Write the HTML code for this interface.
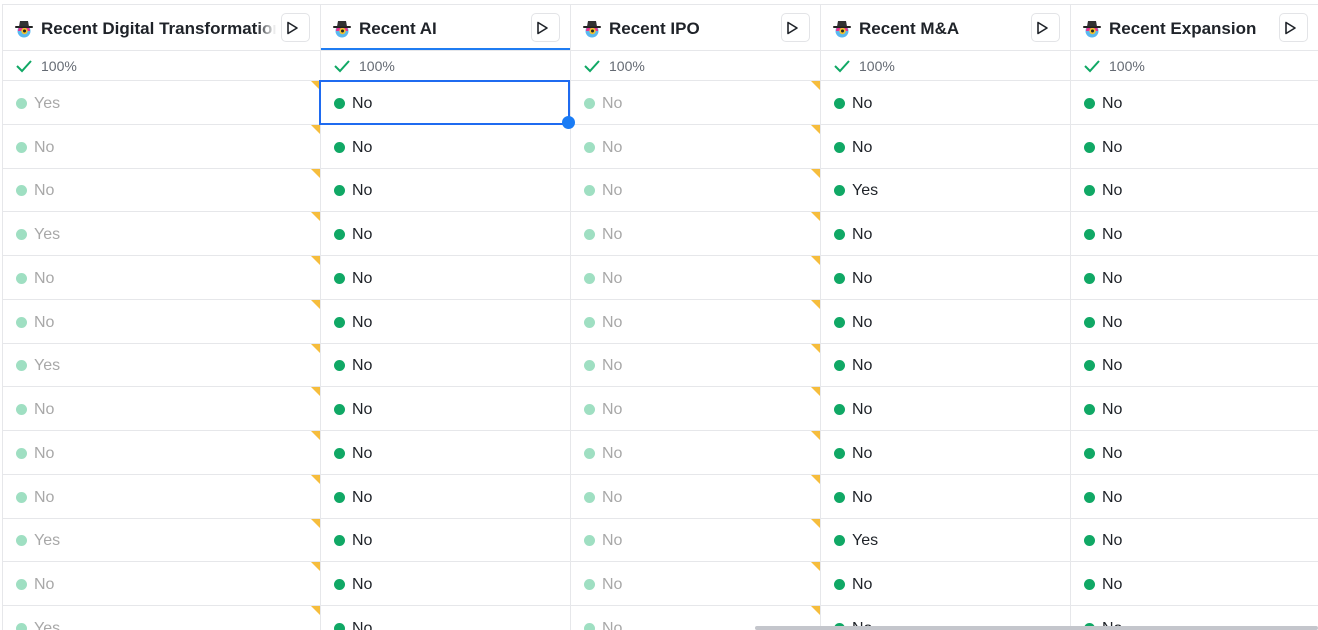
<!DOCTYPE html>
<html><head><meta charset="utf-8"><style>
*{margin:0;padding:0;box-sizing:border-box}
body{width:1318px;height:630px;overflow:hidden;background:#fff;font-family:"Liberation Sans",sans-serif;position:relative}
.col{position:absolute;top:4px;height:626px;border-left:1px solid #e6e7ea;overflow:hidden}
.hd{height:47px;border-top:1px solid #e6e7ea;border-bottom:1px solid #e6e7ea;position:relative;display:flex;align-items:center;padding-left:12px;padding-top:2px;font-size:17px;color:#1f2329;white-space:nowrap}
.hd svg{flex:none;margin-right:8px}
.btn{position:absolute;right:10px;top:8px;width:29px;height:29px;border:1px solid #e3e4e7;border-radius:5px;background:#fff;display:flex;align-items:center;justify-content:center}
.pr{height:30px;border-bottom:1px solid #e6e7ea;display:flex;align-items:center;padding-left:12px;padding-top:1px;font-size:14px;color:#646a73}
.pr svg{margin-right:8px}
.r{height:43.75px;border-bottom:1px solid #e6e7ea;display:flex;align-items:center;padding-left:13px;padding-top:3px;font-size:16px;line-height:18px;color:#1f2329;position:relative}
.r i{width:11px;height:11px;border-radius:50%;background:#10a865;margin-right:7px;display:inline-block;margin-top:-1px}
.l .r{color:#a8a8a8}.l .r i{background:#9fdfc2}
.t .r::after{content:"";position:absolute;right:0;top:0;border-top:9px solid #f6bd3c;border-left:9px solid transparent}
.fade{background:linear-gradient(90deg,rgba(255,255,255,0),#fff 80%);position:absolute;right:39px;top:0;width:24px;height:44px}
</style></head><body>
<svg width="0" height="0" style="position:absolute"><defs>
<g id="ic"><circle cx="9" cy="12" r="6.5" fill="#5ab8f0"/><path d="M3 12a6 6 0 0 1 12 0z" fill="#e8348f"/><circle cx="9.5" cy="12" r="3.2" fill="#f2c230"/><circle cx="9.5" cy="12" r="1.5" fill="#222"/><rect x="0" y="7" width="18" height="2" rx="1" fill="#222"/><path d="M4 7.5 5 2h8l1 5.5z" fill="#333"/></g>
<g id="pl"><path d="M5 3.5v11l9-5.5z" fill="none" stroke="#1f2329" stroke-width="1.6" stroke-linejoin="round"/></g>
<g id="ck"><path d="M2 9l5 5 9-10" fill="none" stroke="#10a865" stroke-width="2"/></g>
</defs></svg>

<div class="col l t" style="left:2px;width:318px">
<div class="hd"><svg width="18" height="19"><use href="#ic"/></svg><span style="font-weight:600">Recent Digital Transformation</span><div class="fade"></div><div class="btn"><svg width="18" height="18"><use href="#pl"/></svg></div></div>
<div class="pr"><svg width="18" height="18"><use href="#ck"/></svg>100%</div>
<div class="r"><i></i>Yes</div><div class="r"><i></i>No</div><div class="r"><i></i>No</div><div class="r"><i></i>Yes</div><div class="r"><i></i>No</div><div class="r"><i></i>No</div><div class="r"><i></i>Yes</div><div class="r"><i></i>No</div><div class="r"><i></i>No</div><div class="r"><i></i>No</div><div class="r"><i></i>Yes</div><div class="r"><i></i>No</div><div class="r"><i></i>Yes</div>
</div>

<div class="col" style="left:320px;width:250px">
<div class="hd" style="box-shadow:inset 0 -2px 0 #1f7cf2"><svg width="18" height="19"><use href="#ic"/></svg><span style="font-weight:600">Recent AI</span><div class="btn"><svg width="18" height="18"><use href="#pl"/></svg></div></div>
<div class="pr"><svg width="18" height="18"><use href="#ck"/></svg>100%</div>
<div class="r"><i></i>No</div><div class="r"><i></i>No</div><div class="r"><i></i>No</div><div class="r"><i></i>No</div><div class="r"><i></i>No</div><div class="r"><i></i>No</div><div class="r"><i></i>No</div><div class="r"><i></i>No</div><div class="r"><i></i>No</div><div class="r"><i></i>No</div><div class="r"><i></i>No</div><div class="r"><i></i>No</div><div class="r"><i></i>No</div>
</div>

<div class="col l t" style="left:570px;width:250px">
<div class="hd"><svg width="18" height="19"><use href="#ic"/></svg><span style="font-weight:600">Recent IPO</span><div class="btn"><svg width="18" height="18"><use href="#pl"/></svg></div></div>
<div class="pr"><svg width="18" height="18"><use href="#ck"/></svg>100%</div>
<div class="r"><i></i>No</div><div class="r"><i></i>No</div><div class="r"><i></i>No</div><div class="r"><i></i>No</div><div class="r"><i></i>No</div><div class="r"><i></i>No</div><div class="r"><i></i>No</div><div class="r"><i></i>No</div><div class="r"><i></i>No</div><div class="r"><i></i>No</div><div class="r"><i></i>No</div><div class="r"><i></i>No</div><div class="r"><i></i>No</div>
</div>

<div class="col" style="left:820px;width:250px">
<div class="hd"><svg width="18" height="19"><use href="#ic"/></svg><span style="font-weight:600">Recent M&amp;A</span><div class="btn"><svg width="18" height="18"><use href="#pl"/></svg></div></div>
<div class="pr"><svg width="18" height="18"><use href="#ck"/></svg>100%</div>
<div class="r"><i></i>No</div><div class="r"><i></i>No</div><div class="r"><i></i>Yes</div><div class="r"><i></i>No</div><div class="r"><i></i>No</div><div class="r"><i></i>No</div><div class="r"><i></i>No</div><div class="r"><i></i>No</div><div class="r"><i></i>No</div><div class="r"><i></i>No</div><div class="r"><i></i>Yes</div><div class="r"><i></i>No</div><div class="r"><i></i>No</div>
</div>

<div class="col" style="left:1070px;width:250px">
<div class="hd"><svg width="18" height="19"><use href="#ic"/></svg><span style="font-weight:600">Recent Expansion</span><div class="btn" style="right:12px"><svg width="18" height="18"><use href="#pl"/></svg></div></div>
<div class="pr"><svg width="18" height="18"><use href="#ck"/></svg>100%</div>
<div class="r"><i></i>No</div><div class="r"><i></i>No</div><div class="r"><i></i>No</div><div class="r"><i></i>No</div><div class="r"><i></i>No</div><div class="r"><i></i>No</div><div class="r"><i></i>No</div><div class="r"><i></i>No</div><div class="r"><i></i>No</div><div class="r"><i></i>No</div><div class="r"><i></i>No</div><div class="r"><i></i>No</div><div class="r"><i></i>No</div>
</div>

<div style="position:absolute;left:319px;top:80px;width:251px;height:45px;border:2px solid #1f6bf0"></div>
<div style="position:absolute;left:562px;top:116px;width:13px;height:13px;border-radius:50%;background:#1a7cf5"></div>
<div style="position:absolute;left:755px;top:626px;width:563px;height:4px;background:#c4c6cc;border-radius:2px"></div>
</body></html>
